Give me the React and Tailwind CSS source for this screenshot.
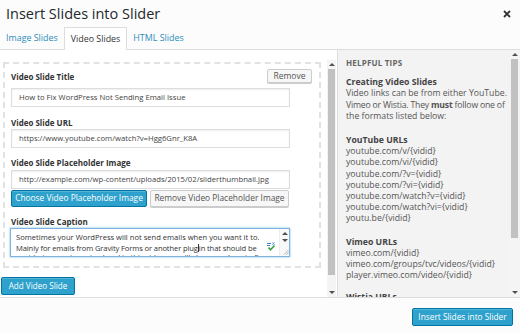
import React from 'react'

const youtubeUrls = [
  'youtube.com/v/{vidid}',
  'youtube.com/vi/{vidid}',
  'youtube.com/?v={vidid}',
  'youtube.com/?vi={vidid}',
  'youtube.com/watch?v={vidid}',
  'youtube.com/watch?vi={vidid}',
  'youtu.be/{vidid}',
]

const vimeoUrls = [
  'vimeo.com/{vidid}',
  'vimeo.com/groups/tvc/videos/{vidid}',
  'player.vimeo.com/video/{vidid}',
]

function ArrowUp() {
  return <div className="w-0 h-0 border-x-[3px] border-x-transparent border-b-[3px] border-b-[#505050]" />
}

function ArrowDown() {
  return <div className="w-0 h-0 border-x-[3px] border-x-transparent border-t-[3px] border-t-[#505050]" />
}

// fake native scrollbar
function Scrollbar({ thumbClass, className = '' }) {
  return (
    <div className={`w-[9px] shrink-0 bg-[#f4f4f4] flex flex-col items-center ${className}`}>
      <div className="h-[9px] flex items-center justify-center"><ArrowUp /></div>
      <div className={`w-[7px] bg-[#c1c1c1] ${thumbClass}`} />
      <div className="flex-1" />
      <div className="h-[10px] flex items-center justify-center"><ArrowDown /></div>
    </div>
  )
}

function Label({ children, className = '' }) {
  return <div className={`h-[13px] text-[8px] leading-[13px] font-bold text-[#333] ${className}`}>{children}</div>
}

function TextInput({ value, className = '' }) {
  return (
    <div className={`w-[279px] h-[19px] border border-[#ddd] bg-white shadow-[inset_0_1px_2px_rgba(0,0,0,0.07)] pl-[7px] flex items-center text-[7.7px] text-[#444] whitespace-nowrap overflow-hidden ${className}`}>
      {value}
    </div>
  )
}

function SpellIcon() {
  return (
    <svg width="9" height="9" viewBox="0 0 9 9">
      <path d="M0 1.5h4M0 3.5h3" stroke="#3b7bd0" strokeWidth="1" />
      <path d="M5.5 0.5l2 2.2M7.5 0.5l-2 2.2" stroke="#3b7bd0" strokeWidth="0.9" />
      <path d="M1.5 5.5l2 2.3 4-4.3" stroke="#2aa33a" strokeWidth="1.5" fill="none" />
    </svg>
  )
}

function App() {
  return (
    <div className="w-[520px] h-[333px] flex flex-col bg-white font-['Open_Sans',sans-serif] overflow-hidden">
      {/* header */}
      <div className="h-[50px] shrink-0 bg-[#fcfcfc] flex flex-col">
        <div className="h-[27px] flex items-center justify-between pl-[6px] pr-[9px]">
          <h1 className="text-[14.5px] leading-none text-[#23282d] pt-[1px]">Insert Slides into Slider</h1>
          <svg width="8" height="8" viewBox="0 0 8 8">
            <path d="M1 1l6 6M7 1l-6 6" stroke="#333" strokeWidth="1.8" />
          </svg>
        </div>
        <div className="h-[23px] flex items-end border-b border-[#ddd] text-[8.9px]">
          <div className="h-[22px] px-[6px] flex items-center text-[#2e8cba]">Image Slides</div>
          <div className="h-[23px] px-[6px] flex items-center text-[#333] bg-white border border-b-0 border-[#ddd] -mb-px">Video Slides</div>
          <div className="h-[22px] px-[6px] flex items-center text-[#2e8cba]">HTML Slides</div>
        </div>
      </div>

      {/* main */}
      <div className="h-[247px] shrink-0 flex">
        <div className="w-[337px] shrink-0 flex">
          <div className="flex-1 min-w-0 pt-[12px] flex flex-col overflow-hidden">
            <div className="ml-[3px] w-[318px] border-2 border-dashed border-[#e2e2e2] pl-[6px] pr-[7px] pt-[4px] pb-[9px] flex flex-col">
              <div className="h-[16px] flex items-center justify-between">
                <Label>Video Slide Title</Label>
                <button className="h-[14px] w-[45px] border border-[#ccc] bg-[#f7f7f7] rounded-[2px] text-[8.5px] leading-none text-[#555] shadow-[0_1px_0_#ccc]">Remove</button>
              </div>
              <TextInput className="mt-[4px]" value="How to Fix WordPress Not Sending Email Issue" />

              <Label className="mt-[9px]">Video Slide URL</Label>
              <TextInput value="https://www.youtube.com/watch?v=Hgg6Gnr_K8A" />

              <Label className="mt-[8px]">Video Slide Placeholder Image</Label>
              <TextInput className="mt-[1px]" value="http://example.com/wp-content/uploads/2015/02/sliderthumbnail.jpg" />

              <div className="mt-[1px] flex gap-[3px]">
                <button className="h-[17px] w-[136px] rounded-[2px] bg-[#2ea2cc] border border-[#0074a2] text-white text-[8.4px] leading-none whitespace-nowrap shadow-[inset_0_1px_0_rgba(120,200,230,0.5)]">Choose Video Placeholder Image</button>
                <button className="h-[17px] w-[139px] rounded-[2px] bg-[#f7f7f7] border border-[#ccc] text-[#555] text-[8.4px] leading-none whitespace-nowrap shadow-[0_1px_0_#ccc]">Remove Video Placeholder Image</button>
              </div>

              <Label className="mt-[8px]">Video Slide Caption</Label>
              <div className="w-[280px] h-[29px] border border-[#7fb2e0] shadow-[0_0_2px_rgba(30,140,190,0.6)] bg-white flex overflow-hidden -ml-[1px]">
                <div className="flex-1 min-w-0 pl-[5px] pt-[3px] pr-[2px] text-[7.6px] leading-[10.5px] text-[#333] relative overflow-hidden">
                  <div className="whitespace-nowrap">Sometimes your WordPress will not send emails when you want it to.</div>
                  <div className="whitespace-nowrap tracking-[-0.12px]">Mainly for emails from Gravity Forms or another plug<span className="inline-block w-px h-[8px] bg-[#333] align-middle" />in that should be</div>
                  <div className="whitespace-nowrap -mt-[1px]">sent but are not received and in this video we will show you how to fix</div>
                  <div className="absolute right-[3px] top-[13px]"><SpellIcon /></div>
                </div>
                <div className="w-[10px] border-l border-[#eee] bg-[#f8f8f8] flex flex-col items-center pt-[3px]">
                  <ArrowUp />
                  <div className="h-[4px]" />
                  <ArrowDown />
                  <div className="flex-1" />
                  <svg width="6" height="6" viewBox="0 0 6 6" className="mb-[1px] self-end">
                    <path d="M5.5 1L1 5.5M5.5 3.5L3.5 5.5" stroke="#999" strokeWidth="0.8" />
                  </svg>
                </div>
              </div>
            </div>

            <button className="mt-[9px] ml-[1px] self-start h-[18px] w-[74px] rounded-[2px] bg-[#2ea2cc] border border-[#0074a2] text-white text-[8.1px] leading-none whitespace-nowrap shadow-[inset_0_1px_0_rgba(120,200,230,0.5)]">Add Video Slide</button>
          </div>
          <Scrollbar className="mt-[10px] mr-[1px]" thumbClass="h-[206px]" />
        </div>

        {/* helpful tips */}
        <div className="flex-1 min-w-0 flex bg-[#f3f3f3] border-l border-[#ddd]">
          <div className="flex-1 min-w-0 pl-[8px] pt-[7px] text-[8.7px] leading-[11.2px] text-[#555] overflow-hidden">
            <div className="text-[8px] font-bold text-[#666] tracking-[0.2px]">HELPFUL TIPS</div>
            <div className="mt-[9px]">
              <div className="font-bold text-[#444]">Creating Video Slides</div>
              <div className="whitespace-nowrap">Video links can be from either YouTube.</div>
              <div className="whitespace-nowrap tracking-[-0.2px]">Vimeo or Wistia. They <span className="font-bold">must</span> follow one of</div>
              <div className="whitespace-nowrap">the formats listed below:</div>
            </div>
            <div className="mt-[13px]">
              <div className="font-bold text-[#444]">YouTube URLs</div>
              {youtubeUrls.map((u) => (
                <div key={u} className="whitespace-nowrap">{u}</div>
              ))}
            </div>
            <div className="mt-[12px]">
              <div className="font-bold text-[#444]">Vimeo URLs</div>
              {vimeoUrls.map((u) => (
                <div key={u} className="whitespace-nowrap">{u}</div>
              ))}
            </div>
            <div className="mt-[11px]">
              <div className="font-bold text-[#444]">Wistia URLs</div>
            </div>
          </div>
          <Scrollbar className="mr-[1px]" thumbClass="h-[179px]" />
        </div>
      </div>

      {/* footer */}
      <div className="h-[36px] shrink-0 bg-[#fcfcfc] border-t border-[#ddd] flex justify-end items-start pt-[10px] pr-[7px]">
        <button className="h-[18px] w-[101px] rounded-[2px] bg-[#2ea2cc] border border-[#0074a2] text-white text-[8.3px] leading-none whitespace-nowrap shadow-[inset_0_1px_0_rgba(120,200,230,0.5)]">Insert Slides into Slider</button>
      </div>
    </div>
  )
}

export default App
